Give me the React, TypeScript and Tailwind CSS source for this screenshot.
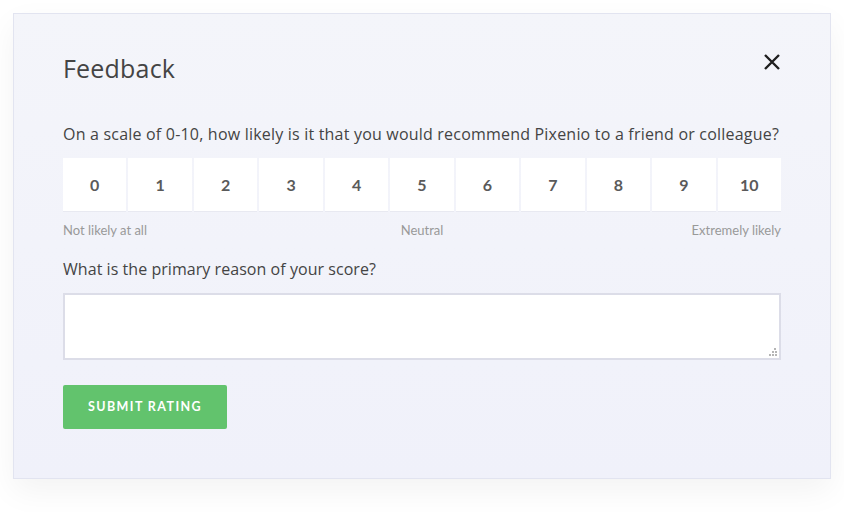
import React from "react";

export default function App() {
  const nums = [0, 1, 2, 3, 4, 5, 6, 7, 8, 9, 10];
  return (
    <div className="w-[844px] h-[512px] bg-white pt-[13px] pl-[13px]" style={{ fontFamily: "Lato, sans-serif" }}>
      <div className="w-[818px] h-[466px] border border-[#e2e4f0] bg-gradient-to-b from-[#f4f5fa] to-[#f0f1fa] shadow-[0_12px_30px_rgba(0,0,0,0.05)] px-[49px] pt-[40px]">
        <div className="flex items-start justify-between">
          <h1 className="text-[25px] leading-[30px] text-[#444] font-normal mt-[-1px] tracking-[0.2px]" style={{ fontFamily: "'Open Sans', sans-serif" }}>Feedback</h1>
          <svg width="20" height="20" viewBox="0 0 20 20" className="mt-[-2px] mr-[-1px]">
            <path d="M3 3 L17 17 M17 3 L3 17" stroke="#1f1f1f" strokeWidth="2.4" strokeLinecap="butt" />
          </svg>
        </div>
        <p className="mt-[41px] text-[16px] leading-[20px] text-[#444] tracking-[0.2px]" style={{ fontFamily: "'Open Sans', sans-serif" }}>
          On a scale of 0-10, how likely is it that you would recommend Pixenio to a friend or colleague?
        </p>
        <div className="mt-[14px] grid grid-cols-11 gap-[2px]">
          {nums.map((n) => (
            <div key={n} className="h-[54px] bg-white border-b border-[#e8e9f1] flex items-center justify-center text-[16px] font-bold text-[#5a5a5a]">
              {n}
            </div>
          ))}
        </div>
        <div className="mt-[9px] grid grid-cols-3 text-[13px] leading-[18px] text-[#999]">
          <span className="text-left">Not likely at all</span>
          <span className="text-center">Neutral</span>
          <span className="text-right">Extremely likely</span>
        </div>
        <p className="mt-[20px] text-[16px] leading-[20px] text-[#444] tracking-[0.05px]" style={{ fontFamily: "'Open Sans', sans-serif" }}>
          What is the primary reason of your score?
        </p>
        <div className="mt-[14px] relative h-[67px] bg-white border-2 border-[#dcdde8]">
          <svg width="8" height="8" viewBox="0 0 8 8" className="absolute right-[2px] bottom-[2px]">
            <rect x="5" y="0" width="2" height="2" fill="#b5b5b5" />
            <rect x="3" y="3" width="2" height="2" fill="#b5b5b5" />
            <rect x="6" y="3" width="2" height="2" fill="#b5b5b5" />
            <rect x="0" y="6" width="2" height="2" fill="#b5b5b5" />
            <rect x="3" y="6" width="2" height="2" fill="#b5b5b5" />
            <rect x="6" y="6" width="2" height="2" fill="#b5b5b5" />
          </svg>
        </div>
        <button className="mt-[25px] w-[164px] h-[44px] bg-[#62c36d] rounded-[2px] text-white text-[12.5px] font-bold tracking-[1.4px]">
          SUBMIT RATING
        </button>
      </div>
    </div>
  );
}
